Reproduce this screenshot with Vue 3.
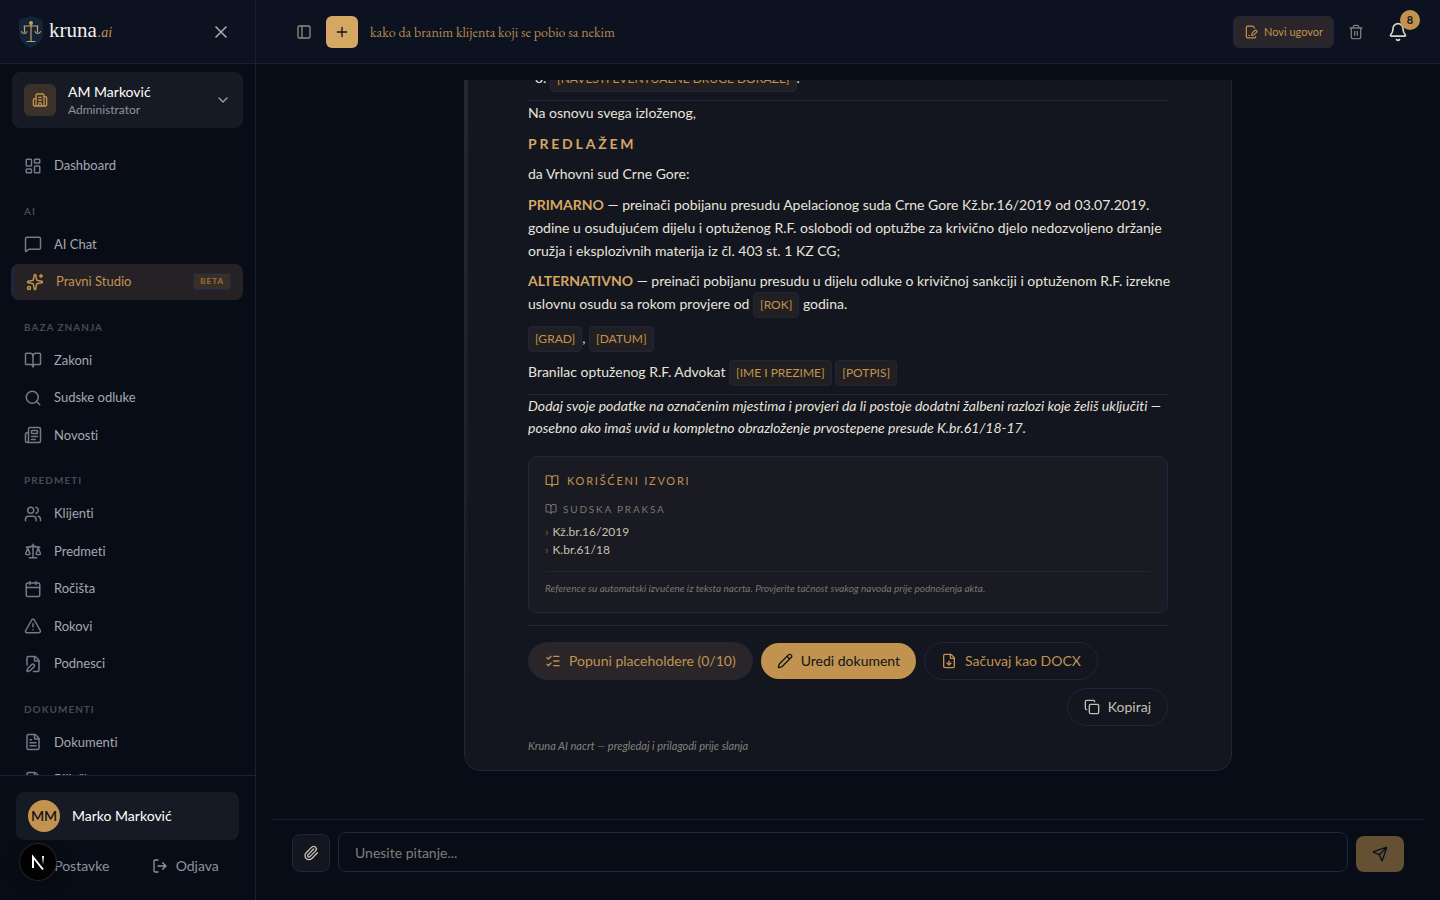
<script setup>
import { ref } from 'vue'

const question = ref('')

// 24x24 stroke icons
const icons = {
  close: '<path d="M18 6 6 18M6 6l12 12"/>',
  chevron: '<path d="m6 9 6 6 6-6"/>',
  building: '<path d="M10 12h4M10 8h4M14 21v-3a2 2 0 0 0-4 0v3"/><path d="M6 10H4a2 2 0 0 0-2 2v7a2 2 0 0 0 2 2h16a2 2 0 0 0 2-2V9a2 2 0 0 0-2-2h-2"/><path d="M6 21V5a2 2 0 0 1 2-2h8a2 2 0 0 1 2 2v16"/>',
  dashboard: '<rect width="7" height="9" x="3" y="3" rx="1"/><rect width="7" height="5" x="14" y="3" rx="1"/><rect width="7" height="9" x="14" y="12" rx="1"/><rect width="7" height="5" x="3" y="16" rx="1"/>',
  message: '<path d="M22 17a2 2 0 0 1-2 2H6.828a2 2 0 0 0-1.414.586l-2.202 2.202A.71.71 0 0 1 2 21.286V5a2 2 0 0 1 2-2h16a2 2 0 0 1 2 2z"/>',
  sparkles: '<path d="M11.017 2.814a1 1 0 0 1 1.966 0l1.051 5.558a2 2 0 0 0 1.594 1.594l5.558 1.051a1 1 0 0 1 0 1.966l-5.558 1.051a2 2 0 0 0-1.594 1.594l-1.051 5.558a1 1 0 0 1-1.966 0l-1.051-5.558a2 2 0 0 0-1.594-1.594l-5.558-1.051a1 1 0 0 1 0-1.966l5.558-1.051a2 2 0 0 0 1.594-1.594z"/><path d="M20 2v4M22 4h-4"/><circle cx="4" cy="20" r="2"/>',
  book: '<path d="M12 7v14"/><path d="M3 18a1 1 0 0 1-1-1V4a1 1 0 0 1 1-1h5a4 4 0 0 1 4 4 4 4 0 0 1 4-4h5a1 1 0 0 1 1 1v13a1 1 0 0 1-1 1h-6a3 3 0 0 0-3 3 3 3 0 0 0-3-3z"/>',
  search: '<path d="m21 21-4.34-4.34"/><circle cx="11" cy="11" r="8"/>',
  news: '<path d="M15 18h-5M18 14h-8"/><path d="M4 22h16a2 2 0 0 0 2-2V4a2 2 0 0 0-2-2H8a2 2 0 0 0-2 2v16a2 2 0 0 1-4 0v-9a2 2 0 0 1 2-2h2"/><rect width="8" height="4" x="10" y="6" rx="1"/>',
  users: '<path d="M16 21v-2a4 4 0 0 0-4-4H6a4 4 0 0 0-4 4v2"/><path d="M16 3.128a4 4 0 0 1 0 7.744M22 21v-2a4 4 0 0 0-3-3.87"/><circle cx="9" cy="7" r="4"/>',
  scale: '<path d="M12 3v18M7 21h10"/><path d="m19 8 3 8a5 5 0 0 1-6 0zV7"/><path d="M3 7h1a17 17 0 0 0 8-2 17 17 0 0 0 8 2h1"/><path d="m5 8 3 8a5 5 0 0 1-6 0zV7"/>',
  calendar: '<path d="M8 2v4M16 2v4"/><rect width="18" height="18" x="3" y="4" rx="2"/><path d="M3 10h18"/>',
  warning: '<path d="m21.73 18-8-14a2 2 0 0 0-3.48 0l-8 14A2 2 0 0 0 4 21h16a2 2 0 0 0 1.73-3M12 9v4M12 17h.01"/>',
  filePen: '<path d="M12.659 22H18a2 2 0 0 0 2-2V8a2.4 2.4 0 0 0-.706-1.706l-3.588-3.588A2.4 2.4 0 0 0 14 2H6a2 2 0 0 0-2 2v9.34"/><path d="M14 2v5a1 1 0 0 0 1 1h5"/><path d="M10.378 12.622a1 1 0 0 1 3 3.003L8.36 20.637a2 2 0 0 1-.854.506l-2.867.837a.5.5 0 0 1-.62-.62l.836-2.869a2 2 0 0 1 .506-.853z"/>',
  file: '<path d="M6 22a2 2 0 0 1-2-2V4a2 2 0 0 1 2-2h8a2.4 2.4 0 0 1 1.704.706l3.588 3.588A2.4 2.4 0 0 1 20 8v12a2 2 0 0 1-2 2z"/><path d="M14 2v5a1 1 0 0 0 1 1h5M10 9H8M16 13H8M16 17H8"/>',
  settings: '<circle cx="12" cy="12" r="3"/><path d="M12 2v4M12 18v4M2 12h4M18 12h4"/>',
  logout: '<path d="m16 17 5-5-5-5M21 12H9M9 21H5a2 2 0 0 1-2-2V5a2 2 0 0 1 2-2h4"/>',
  panel: '<rect width="18" height="18" x="3" y="3" rx="2"/><path d="M9 3v18"/>',
  plus: '<path d="M5 12h14M12 5v14"/>',
  contract: '<path d="m18 5-2.414-2.414A2 2 0 0 0 14.172 2H6a2 2 0 0 0-2 2v16a2 2 0 0 0 2 2h12a2 2 0 0 0 2-2"/><path d="M21.378 12.626a1 1 0 0 0-3.004-3.004l-4.01 4.012a2 2 0 0 0-.506.854l-.837 2.87a.5.5 0 0 0 .62.62l2.87-.837a2 2 0 0 0 .854-.506z"/><path d="M8 18h1"/>',
  trash: '<path d="M10 11v6M14 11v6M19 6v14a2 2 0 0 1-2 2H7a2 2 0 0 1-2-2V6M3 6h18M8 6V4a2 2 0 0 1 2-2h4a2 2 0 0 1 2 2v2"/>',
  bell: '<path d="M10.268 21a2 2 0 0 0 3.464 0"/><path d="M3.262 15.326A1 1 0 0 0 4 17h16a1 1 0 0 0 .74-1.673C19.41 13.956 18 12.499 18 8A6 6 0 0 0 6 8c0 4.499-1.411 5.956-2.738 7.326"/>',
  checks: '<path d="M13 5h8M13 12h8M13 19h8M3 17l2 2 4-4M3 7l2 2 4-4"/>',
  pencil: '<path d="M21.174 6.812a1 1 0 0 0-3.986-3.987L3.842 16.174a2 2 0 0 0-.5.83l-1.321 4.352a.5.5 0 0 0 .623.622l4.353-1.32a2 2 0 0 0 .83-.497zM15 5l4 4"/>',
  download: '<path d="M6 22a2 2 0 0 1-2-2V4a2 2 0 0 1 2-2h8a2.4 2.4 0 0 1 1.704.706l3.588 3.588A2.4 2.4 0 0 1 20 8v12a2 2 0 0 1-2 2z"/><path d="M14 2v5a1 1 0 0 0 1 1h5M12 18v-6M9 15l3 3 3-3"/>',
  copy: '<rect width="14" height="14" x="8" y="8" rx="2"/><path d="M4 16c-1.1 0-2-.9-2-2V4c0-1.100.9-2 2-2h10c1.100 0 2 .9 2 2"/>',
  clip: '<path d="m16 6-8.414 8.586a2 2 0 0 0 2.829 2.829l8.414-8.586a4 4 0 1 0-5.657-5.657l-8.379 8.551a6 6 0 1 0 8.485 8.485l8.379-8.551"/>',
  send: '<path d="M14.536 21.686a.5.5 0 0 0 .937-.024l6.500-19a.496.496 0 0 0-.635-.635l-19 6.500a.5.5 0 0 0-.024.937l7.930 3.180a2 2 0 0 1 1.112 1.110zM21.854 2.147l-10.940 10.939"/>'
}

const sections = [
  { items: [{ label: 'Dashboard', icon: 'dashboard' }] },
  {
    title: 'AI',
    items: [
      { label: 'AI Chat', icon: 'message' },
      { label: 'Pravni Studio', icon: 'sparkles', active: true, badge: 'BETA' }
    ]
  },
  {
    title: 'BAZA ZNANJA',
    items: [
      { label: 'Zakoni', icon: 'book' },
      { label: 'Sudske odluke', icon: 'search' },
      { label: 'Novosti', icon: 'news' }
    ]
  },
  {
    title: 'PREDMETI',
    items: [
      { label: 'Klijenti', icon: 'users' },
      { label: 'Predmeti', icon: 'scale' },
      { label: 'Ročišta', icon: 'calendar' },
      { label: 'Rokovi', icon: 'warning' },
      { label: 'Podnesci', icon: 'filePen' }
    ]
  },
  {
    title: 'DOKUMENTI',
    items: [
      { label: 'Dokumenti', icon: 'file' },
      { label: 'Bilješke', icon: 'file' }
    ]
  }
]

const sources = ['Kž.br.16/2019', 'K.br.61/18']
</script>

<template>
  <div class="layout">
    <aside class="sidebar">
      <div class="brand-row">
        <a href="#" class="brand">
          <svg class="shield" viewBox="0 0 26 32">
            <path d="M13 0 25 4v13c0 7-5 12-12 15C6 29 1 24 1 17V4z" fill="#12243a" />
            <g stroke="#c9a05c" fill="none" stroke-width="1.2" stroke-linecap="round">
              <path d="M13 7v18M9 25.500h8M6 10h14M6.500 10v6M19.500 10v6" />
              <path d="M3.500 15.500c.5 2.500 5 2.500 5.500 0M17 15.500c.5 2.500 5 2.500 5.500 0" />
            </g>
            <circle cx="13" cy="7" r="2" fill="#c9a05c" />
          </svg>
          <span class="brand-name">kruna<em>.ai</em></span>
        </a>
        <button class="icon-btn close-btn" aria-label="Zatvori">
          <svg class="icon i20" viewBox="0 0 24 24" v-html="icons.close"></svg>
        </button>
      </div>

      <button class="org">
        <span class="org-icon"><svg class="icon i16" viewBox="0 0 24 24" v-html="icons.building"></svg></span>
        <span class="org-text">
          <span class="org-name">AM Marković</span>
          <span class="org-role">Administrator</span>
        </span>
        <svg class="icon i16" viewBox="0 0 24 24" v-html="icons.chevron"></svg>
      </button>

      <nav class="nav">
        <div v-for="(section, i) in sections" :key="i" class="nav-section">
          <h3 v-if="section.title" class="nav-title">{{ section.title }}</h3>
          <div class="nav-items">
            <a
              v-for="item in section.items"
              :key="item.label"
              href="#"
              class="nav-item"
              :class="{ active: item.active }"
            >
              <svg class="icon i18" viewBox="0 0 24 24" v-html="icons[item.icon]"></svg>
              <span>{{ item.label }}</span>
              <span v-if="item.badge" class="beta">{{ item.badge }}</span>
            </a>
          </div>
        </div>
      </nav>

      <div class="sidebar-footer">
        <div class="user">
          <span class="avatar">MM</span>
          <span>Marko Marković</span>
        </div>
        <div class="user-actions">
          <button><svg class="icon i16" viewBox="0 0 24 24" v-html="icons.settings"></svg>Postavke</button>
          <button><svg class="icon i16" viewBox="0 0 24 24" v-html="icons.logout"></svg>Odjava</button>
        </div>
      </div>
    </aside>

    <div class="content">
      <header class="topbar">
        <button class="icon-btn panel-btn" aria-label="Istorija">
          <svg class="icon i16" viewBox="0 0 24 24" v-html="icons.panel"></svg>
        </button>
        <button class="new-btn" aria-label="Novi razgovor">
          <svg class="icon i16" viewBox="0 0 24 24" v-html="icons.plus"></svg>
        </button>
        <h1 class="chat-title">kako da branim klijenta koji se pobio sa nekim</h1>
        <button class="contract-btn">
          <svg class="icon i14" viewBox="0 0 24 24" v-html="icons.contract"></svg>
          Novi ugovor
        </button>
        <button class="icon-btn trash-btn" aria-label="Obriši">
          <svg class="icon i16" viewBox="0 0 24 24" v-html="icons.trash"></svg>
        </button>
        <button class="icon-btn bell-btn" aria-label="Obavještenja">
          <svg class="icon i20" viewBox="0 0 24 24" v-html="icons.bell"></svg>
          <span class="count">8</span>
        </button>
      </header>

      <main class="main">
        <div class="messages">
          <article class="draft">
            <div class="draft-text">
              <ol start="3">
                <li><span class="tag">[NAVESTI EVENTUALNE DRUGE DOKAZE]</span>.</li>
              </ol>
              <hr />
              <p>Na osnovu svega izloženog,</p>
              <p class="proposal"><strong>PREDLAŽEM</strong></p>
              <p>da Vrhovni sud Crne Gore:</p>
              <p class="claim">
                <strong>PRIMARNO</strong> — preinači pobijanu presudu Apelacionog suda Crne Gore Kž.br.16/2019 od
                03.07.2019. godine u osuđujućem dijelu i optuženog R.F. oslobodi od optužbe za krivično djelo
                nedozvoljeno držanje oružja i eksplozivnih materija iz čl. 403 st. 1 KZ CG;
              </p>
              <p>
                <strong>ALTERNATIVNO</strong> — preinači pobijanu presudu u dijelu odluke o krivičnoj sankciji i
                optuženom R.F. izrekne uslovnu osudu sa rokom provjere od <span class="tag">[ROK]</span> godina.
              </p>
              <p><span class="tag">[GRAD]</span>, <span class="tag">[DATUM]</span></p>
              <p>
                Branilac optuženog R.F. Advokat <span class="tag">[IME I PREZIME]</span> <span class="tag">[POTPIS]</span>
              </p>
              <hr />
              <p class="hint">
                Dodaj svoje podatke na označenim mjestima i provjeri da li postoje dodatni žalbeni razlozi koje želiš
                uključiti — posebno ako imaš uvid u kompletno obrazloženje prvostepene presude K.br.61/18-17.
              </p>
            </div>

            <section class="sources">
              <h2><svg class="icon i14" viewBox="0 0 24 24" v-html="icons.book"></svg>KORIŠĆENI IZVORI</h2>
              <h3><svg class="icon i12" viewBox="0 0 24 24" v-html="icons.book"></svg>SUDSKA PRAKSA</h3>
              <ul>
                <li v-for="source in sources" :key="source"><span class="arrow">›</span>{{ source }}</li>
              </ul>
              <p>Reference su automatski izvučene iz teksta nacrta. Provjerite tačnost svakog navoda prije podnošenja akta.</p>
            </section>

            <div class="actions">
              <button class="pill filled">
                <svg class="icon i16" viewBox="0 0 24 24" v-html="icons.checks"></svg>Popuni placeholdere (0/10)
              </button>
              <button class="pill gold">
                <svg class="icon i16" viewBox="0 0 24 24" v-html="icons.pencil"></svg>Uredi dokument
              </button>
              <button class="pill">
                <svg class="icon i16" viewBox="0 0 24 24" v-html="icons.download"></svg>Sačuvaj kao DOCX
              </button>
              <button class="pill copy">
                <svg class="icon i16" viewBox="0 0 24 24" v-html="icons.copy"></svg>Kopiraj
              </button>
            </div>
            <p class="disclaimer">Kruna AI nacrt — pregledaj i prilagodi prije slanja</p>
          </article>
        </div>

        <form class="composer" @submit.prevent>
          <button type="button" class="attach" aria-label="Priloži">
            <svg class="icon i16" viewBox="0 0 24 24" v-html="icons.clip"></svg>
          </button>
          <input v-model="question" type="text" placeholder="Unesite pitanje..." aria-label="Unesite pitanje" />
          <button type="submit" class="send" aria-label="Pošalji">
            <svg class="icon i16" viewBox="0 0 24 24" v-html="icons.send"></svg>
          </button>
        </form>
      </main>
    </div>

    <button class="dev-badge" aria-label="Dev">
      <svg viewBox="0 0 36 36" fill="none" stroke-width="2">
        <defs>
          <linearGradient id="fade" x1="0" y1="0" x2="0" y2="1">
            <stop offset="0" stop-color="#fff" />
            <stop offset="1" stop-color="#fff" stop-opacity="0" />
          </linearGradient>
        </defs>
        <path d="M13 24V13l10 12.500" stroke="#fff" />
        <rect x="22" y="12" width="2" height="9" fill="url(#fade)" />
      </svg>
    </button>
  </div>
</template>

<style>
body {
  margin: 0;
  background: #080c16;
}
</style>

<style scoped>
.layout {
  display: flex;
  height: 100vh;
  overflow: hidden;
  background: #080c16;
  color: #e8e4da;
  font-family: Lato, 'Liberation Sans', sans-serif;
  font-size: 14px;
  line-height: 20px;
  font-variant-ligatures: none;
}

.layout * {
  box-sizing: border-box;
}

button {
  padding: 0;
  border: 0;
  background: none;
  color: inherit;
  font: inherit;
  cursor: pointer;
}

a {
  color: inherit;
  text-decoration: none;
}

h1, h2, h3, p, ul, ol {
  margin: 0;
  padding: 0;
  font-weight: 400;
}

/* --- icons --- */
.icon {
  flex: none;
  fill: none;
  stroke: currentColor;
  stroke-width: 2;
  stroke-linecap: round;
  stroke-linejoin: round;
}

.i12 { width: 12px; height: 12px; }
.i14 { width: 14px; height: 14px; }
.i16 { width: 16px; height: 16px; }
.i18 { width: 18px; height: 18px; }
.i20 { width: 20px; height: 20px; }

.icon-btn {
  display: flex;
  align-items: center;
  justify-content: center;
  height: 32px;
}

/* --- sidebar --- */
.sidebar {
  flex: none;
  display: flex;
  flex-direction: column;
  width: 256px;
  border-right: 1px solid #1a2036;
}

.brand-row {
  flex: none;
  display: flex;
  align-items: center;
  justify-content: space-between;
  height: 64px;
  padding: 0 24px 0 18px;
  border-bottom: 1px solid #1a2036;
  background: #0c1220;
}

.brand {
  display: flex;
  align-items: center;
  gap: 5px;
}

.shield {
  width: 26px;
  height: 32px;
}

.brand-name {
  font-family: 'Liberation Serif', serif;
  font-size: 21px;
  color: #f4f1ea;
}

.brand-name em {
  margin-left: 1px;
  font-size: 14px;
  color: #c1934f;
}

.close-btn {
  color: #a3a7b0;
}

.org {
  flex: none;
  display: flex;
  align-items: center;
  gap: 12px;
  height: 56px;
  margin: 8px 12px 0;
  padding: 0 12px;
  border-radius: 8px;
  background: #161a24;
  color: #9ca0aa;
  text-align: left;
}

.org-icon {
  display: flex;
  align-items: center;
  justify-content: center;
  width: 32px;
  height: 32px;
  border-radius: 6px;
  background: #3a3129;
  color: #c1934f;
}

.org-text {
  flex: 1;
  display: flex;
  flex-direction: column;
}

.org-name {
  color: #fff;
}

.org-role {
  font-size: 12px;
  line-height: 16px;
  color: #8f939d;
}

.nav {
  flex: 1;
  display: flex;
  flex-direction: column;
  gap: 20px;
  min-height: 0;
  padding: 20px 12px 0;
  overflow: hidden;
}

.nav-title {
  margin-bottom: 8px;
  padding: 0 12px;
  font-size: 10px;
  font-weight: 700;
  line-height: 1.5;
  letter-spacing: 1px;
  color: #464a55;
}

.nav-items {
  display: flex;
  flex-direction: column;
  gap: 2px;
}

.nav-item {
  display: flex;
  align-items: center;
  gap: 12px;
  padding: 8px 12px;
  border-radius: 8px;
  font-size: 13px;
  line-height: 1.5;
  color: #a4a8b1;
}

.nav-item .icon {
  color: #757a86;
}

.nav-item.active {
  border-left: 2px solid #1c2640;
  background: #262124;
  box-shadow: -1px 0 0 #1c2640;
  color: #c1934f;
}

.nav-item.active .icon {
  color: #c1934f;
}

.beta {
  margin-left: auto;
  padding: 0 6px;
  border: 1px solid #1e2a45;
  border-radius: 2px;
  background: #3a2f27;
  font-size: 8px;
  font-weight: 700;
  line-height: 15px;
  letter-spacing: 1px;
  color: #94723f;
}

.sidebar-footer {
  flex: none;
  display: flex;
  flex-direction: column;
  gap: 8px;
  padding: 16px;
  border-top: 1px solid #1a2036;
}

.user {
  display: flex;
  align-items: center;
  gap: 12px;
  padding: 8px 12px;
  border-radius: 8px;
  background: #161a24;
  color: #fff;
}

.avatar {
  display: flex;
  align-items: center;
  justify-content: center;
  width: 32px;
  height: 32px;
  border-radius: 50%;
  background: #c1934f;
  font-weight: 600;
  color: #12141c;
}

.user-actions {
  display: flex;
  gap: 8px;
}

.user-actions button {
  flex: 1;
  display: flex;
  align-items: center;
  justify-content: center;
  gap: 8px;
  height: 36px;
  color: #8f939d;
}

/* --- top bar --- */
.content {
  flex: 1;
  display: flex;
  flex-direction: column;
  min-width: 0;
}

.topbar {
  flex: none;
  display: flex;
  align-items: center;
  height: 64px;
  padding: 0 28px 0 32px;
  border-bottom: 1px solid #1a2036;
  background: #0c1220;
}

.panel-btn {
  width: 32px;
  margin-right: 6px;
  color: #8b8981;
}

.new-btn {
  display: flex;
  align-items: center;
  justify-content: center;
  width: 32px;
  height: 32px;
  border-radius: 6px;
  background: #d4a762;
  color: #12141c;
}

.chat-title {
  flex: 1;
  margin-left: 12px;
  font-family: 'EB Garamond', 'Liberation Serif', serif;
  font-size: 14px;
  color: #b68b4d;
}

.contract-btn {
  display: flex;
  align-items: center;
  gap: 6px;
  height: 32px;
  padding: 0 10px;
  border: 1px solid #1c2640;
  border-radius: 6px;
  background: #292528;
  font-size: 11px;
  color: #c1934f;
}

.trash-btn {
  width: 32px;
  margin: 0 12px 0 6px;
  color: #7c7a73;
}

.bell-btn {
  position: relative;
  width: 28px;
  color: #d8d4c8;
}

.count {
  position: absolute;
  top: -6px;
  right: -8px;
  width: 20px;
  height: 20px;
  border-radius: 50%;
  background: #c1934f;
  font-size: 11px;
  font-weight: 700;
  color: #12141c;
}

/* --- conversation --- */
.main {
  flex: 1;
  display: flex;
  flex-direction: column;
  min-height: 0;
  padding: 16px;
}

.messages {
  flex: 1;
  display: flex;
  flex-direction: column;
  justify-content: flex-end;
  min-height: 0;
  padding-bottom: 48px;
  overflow: hidden;
}

.draft {
  position: relative;
  flex: none;
  width: 100%;
  max-width: 768px;
  margin: 0 auto;
  padding: 64px 63px 16px;
  border: 1px solid #1c2640;
  border-radius: 16px;
  background: #13151f;
  overflow: hidden;
}

.draft::before {
  content: '';
  position: absolute;
  top: 0;
  bottom: 0;
  left: 0;
  width: 3px;
  background: linear-gradient(#2c2825, #13151f);
}

.draft-text {
  line-height: 23px;
}

.draft-text p {
  margin: 0 -16px 8px 0;
}

.draft-text p.proposal {
  margin-bottom: 7px;
  letter-spacing: 0.2em;
}

.draft-text p.claim {
  margin-bottom: 7px;
}

.draft-text ol {
  padding-left: 22px;
}

.draft-text hr {
  margin: 8px 0 0;
  border: 0;
  border-top: 1px solid #1c2640;
}

.draft-text strong {
  font-weight: 700;
  color: #d4a762;
}

.draft-text p.hint {
  margin-bottom: 17px;
  line-height: 22px;
  font-style: italic;
}

.tag {
  display: inline-block;
  padding: 2px 6px;
  border: 1px solid #1c2640;
  border-radius: 4px;
  background: #211f22;
  font-size: 12px;
  line-height: 20px;
  color: #c1934f;
}

.sources {
  padding: 16px;
  border: 1px solid #1c2640;
  border-radius: 8px;
  background: #1a1a22;
}

.sources h2 {
  display: flex;
  align-items: center;
  gap: 8px;
  margin-bottom: 12px;
  font-size: 11px;
  line-height: 16px;
  letter-spacing: 0.16em;
  color: #c1934f;
}

.sources h3 {
  display: flex;
  align-items: center;
  gap: 6px;
  margin-bottom: 6px;
  font-size: 10px;
  line-height: 16px;
  letter-spacing: 0.18em;
  color: #7b7770;
}

.sources ul {
  list-style: none;
  font-size: 12px;
  line-height: 18px;
  color: #c5c0b3;
}

.arrow {
  margin-right: 4px;
  color: #80633c;
}

.sources p {
  margin-top: 12px;
  padding-top: 8px;
  border-top: 1px solid #20242f;
  font-size: 10px;
  font-style: italic;
  line-height: 16px;
  color: #7b7770;
}

.actions {
  display: flex;
  flex-wrap: wrap;
  align-items: center;
  gap: 8px;
  margin-top: 12px;
  padding-top: 16px;
  border-top: 1px solid #1c2640;
}

.pill {
  display: flex;
  align-items: center;
  gap: 8px;
  padding: 8px 16px;
  border: 1px solid #1c2640;
  border-radius: 19px;
  color: #c1934f;
}

.pill.filled {
  background: #292528;
}

.pill.gold {
  border: 0;
  background: #c1934f;
  color: #12141c;
}

.pill.copy {
  margin-left: auto;
  color: #c5c0b3;
}

.disclaimer {
  margin-top: 12px;
  font-size: 11px;
  font-style: italic;
  line-height: 16px;
  color: #85827a;
}

/* --- composer --- */
.composer {
  flex: none;
  display: flex;
  align-items: flex-end;
  gap: 8px;
  padding: 12px 20px;
  border-top: 1px solid #1a2036;
}

.attach {
  display: flex;
  align-items: center;
  justify-content: center;
  width: 38px;
  height: 38px;
  border: 1px solid #1c2640;
  border-radius: 8px;
  background: #13151f;
  color: #c5c0b3;
}

.composer input {
  flex: 1;
  min-width: 0;
  height: 40px;
  padding: 0 16px;
  border: 1px solid #1c2640;
  border-radius: 8px;
  background: transparent;
  color: #e8e4da;
  font: inherit;
  outline: none;
}

.composer input::placeholder {
  color: #807e79;
  opacity: 1;
}

.send {
  display: flex;
  align-items: center;
  justify-content: center;
  width: 48px;
  height: 36px;
  border-radius: 8px;
  background: #645032;
  color: #0c101a;
}

.dev-badge {
  position: fixed;
  left: 20px;
  bottom: 20px;
  width: 36px;
  height: 36px;
  border-radius: 50%;
  background: #020203;
  box-shadow: 0 0 0 1px #252525, 0 4px 16px rgba(0, 0, 0, 0.3);
}

.dev-badge svg {
  display: block;
}
</style>
